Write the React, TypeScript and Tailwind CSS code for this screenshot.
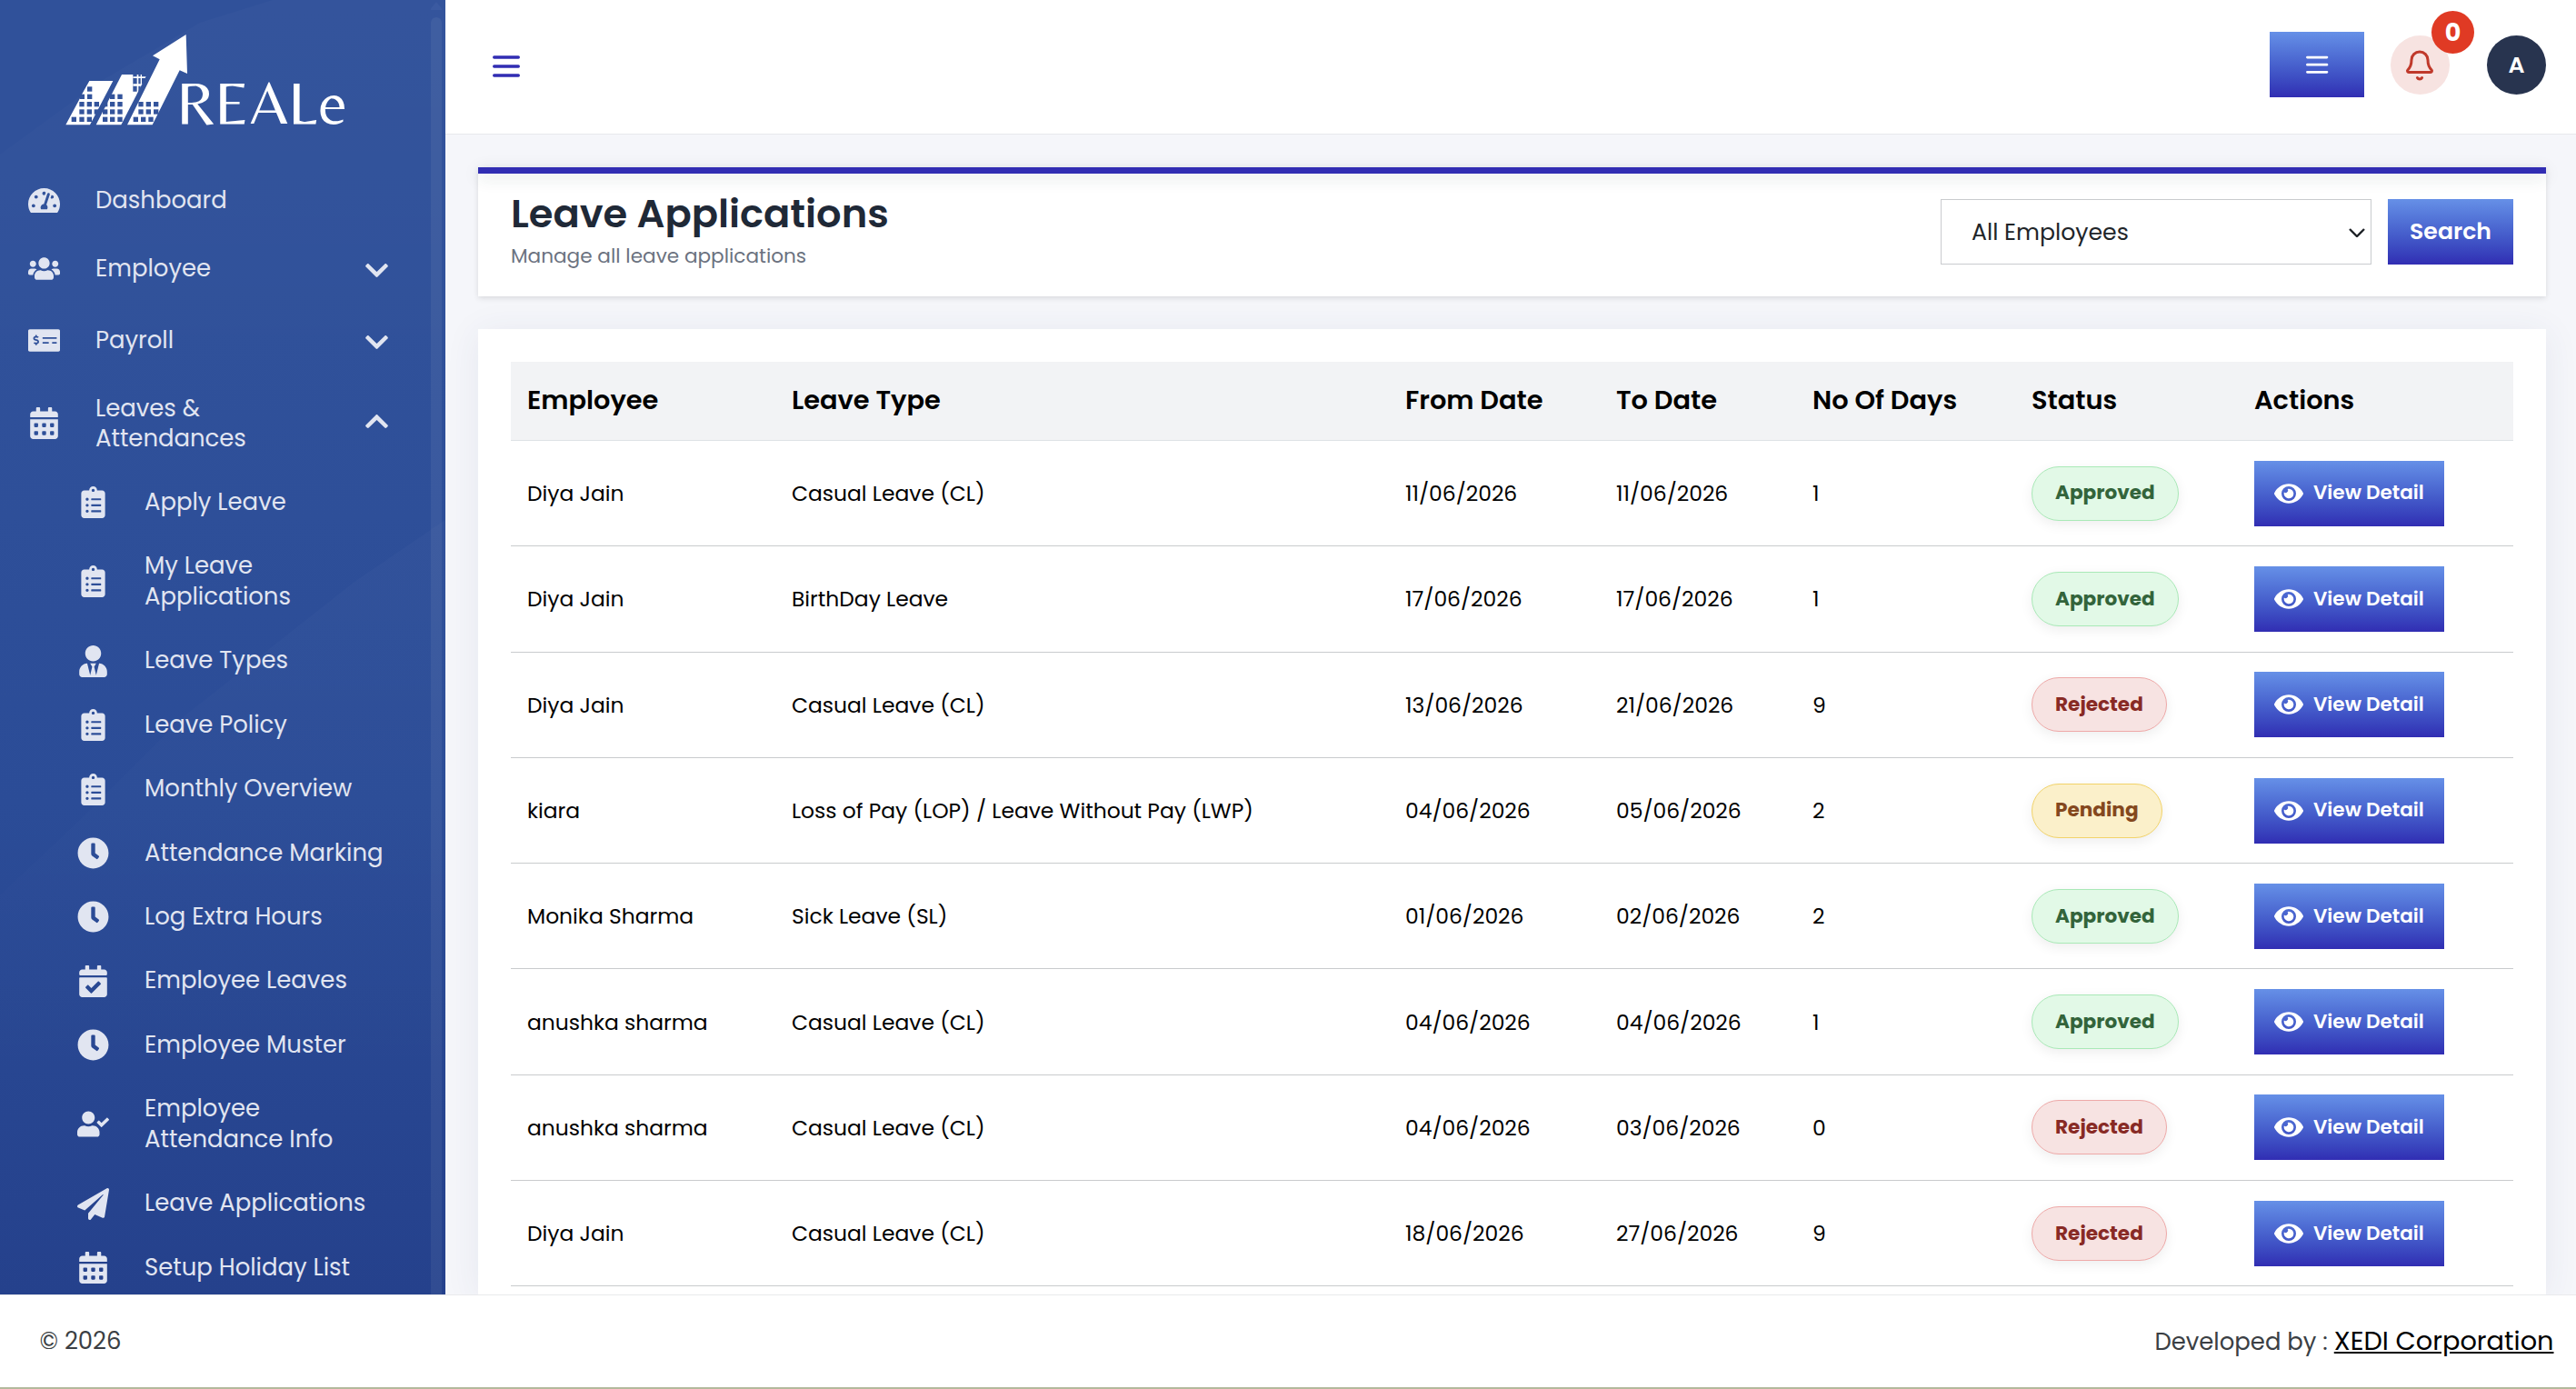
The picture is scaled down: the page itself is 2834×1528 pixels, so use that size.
import type { ReactNode } from "react";
import type { IconType } from "react-icons";
import {
  FaTachometerAlt,
  FaUsers,
  FaMoneyCheckAlt,
  FaCalendarAlt,
  FaClipboardList,
  FaUserTie,
  FaClock,
  FaCalendarCheck,
  FaUserCheck,
  FaPaperPlane,
  FaChevronDown,
  FaChevronUp,
  FaEye,
} from "react-icons/fa";
import { Bell } from "lucide-react";

type Status = "Approved" | "Rejected" | "Pending";

interface Leave {
  employee: string;
  type: string;
  from: string;
  to: string;
  days: number;
  status: Status;
}

const leaves: Leave[] = [
  { employee: "Diya Jain", type: "Casual Leave (CL)", from: "11/06/2026", to: "11/06/2026", days: 1, status: "Approved" },
  { employee: "Diya Jain", type: "BirthDay Leave", from: "17/06/2026", to: "17/06/2026", days: 1, status: "Approved" },
  { employee: "Diya Jain", type: "Casual Leave (CL)", from: "13/06/2026", to: "21/06/2026", days: 9, status: "Rejected" },
  { employee: "kiara", type: "Loss of Pay (LOP) / Leave Without Pay (LWP)", from: "04/06/2026", to: "05/06/2026", days: 2, status: "Pending" },
  { employee: "Monika Sharma", type: "Sick Leave (SL)", from: "01/06/2026", to: "02/06/2026", days: 2, status: "Approved" },
  { employee: "anushka sharma", type: "Casual Leave (CL)", from: "04/06/2026", to: "04/06/2026", days: 1, status: "Approved" },
  { employee: "anushka sharma", type: "Casual Leave (CL)", from: "04/06/2026", to: "03/06/2026", days: 0, status: "Rejected" },
  { employee: "Diya Jain", type: "Casual Leave (CL)", from: "18/06/2026", to: "27/06/2026", days: 9, status: "Rejected" },
];

const subItems: { label: string; icon: IconType; wrap?: boolean }[] = [
  { label: "Apply Leave", icon: FaClipboardList },
  { label: "My Leave Applications", icon: FaClipboardList, wrap: true },
  { label: "Leave Types", icon: FaUserTie },
  { label: "Leave Policy", icon: FaClipboardList },
  { label: "Monthly Overview", icon: FaClipboardList },
  { label: "Attendance Marking", icon: FaClock },
  { label: "Log Extra Hours", icon: FaClock },
  { label: "Employee Leaves", icon: FaCalendarCheck },
  { label: "Employee Muster", icon: FaClock },
  { label: "Employee Attendance Info", icon: FaUserCheck, wrap: true },
  { label: "Leave Applications", icon: FaPaperPlane },
  { label: "Setup Holiday List", icon: FaCalendarAlt },
];

const statusStyles: Record<Status, string> = {
  Approved: "bg-[#e2f9e7] border-[#a9e9b7] text-[#33643b]",
  Rejected: "bg-[#f7e3e2] border-[#eea9a8] text-[#882a25]",
  Pending: "bg-[#fbf0ca] border-[#f2d369] text-[#84481e]",
};

const columns = "grid grid-cols-[291px_675px_232px_216px_241px_245px_1fr]";

function MenuLines({ className }: { className: string }) {
  return (
    <svg viewBox="0 0 24 24" fill="none" stroke="currentColor" strokeWidth="2" strokeLinecap="round" className={className}>
      <path d="M4 6h16M4 12h16M4 18h16" />
    </svg>
  );
}

/* Windows punched into the three bars of the logo. */
const windows: [number, number][] = [
  [93, 196],
  [68, 221], [93, 221],
  [67, 246], [92, 246], [116, 246],
  [67, 271], [92, 271], [116, 271],
  [41, 296], [67, 296], [92, 296],
  [168, 221], [193, 221],
  [144, 246], [168, 246], [193, 246],
  [144, 271], [168, 271], [193, 271],
  [144, 296], [168, 296], [193, 296],
  [262, 246], [287, 246], [312, 246],
  [262, 271], [287, 271], [312, 271],
  [245, 296], [270, 296], [295, 296],
];

function Logo() {
  return (
    <svg viewBox="0 0 990 420" className="h-[140px] w-[330px]">
      <defs>
        <mask id="windows">
          <rect width="990" height="420" fill="white" />
          {windows.map(([x, y]) => (
            <rect key={`${x}-${y}`} x={x} y={y} width="16" height="16" fill="black" />
          ))}
          <path d="M244 156H292L264 212H244Z" fill="black" />
          <path d="M257 156h5v60h-5zM269 156h4v48h-4zM244 163h46v5h-46zM244 187h34v7h-34z" fill="white" />
        </mask>
      </defs>
      <g fill="white" mask="url(#windows)">
        <path d="M100 177H178L102 322H22L66 240 76 220Z" />
        <path d="M207 156H290L205 322H122Z" />
        <path d="M332 106L309 94 419 24 423 153 398 142 308 322H225Z" />
      </g>
      <text y="318" x="388 514 630 756 857" fill="white" fontSize="200" className="font-['Belleza','Lato',sans-serif]">
        REALe
      </text>
    </svg>
  );
}

function MainItem({ icon: Icon, label, className, trailing }: { icon: IconType; label: string; className: string; trailing?: ReactNode }) {
  return (
    <div className={`flex items-center pl-[31px] ${className}`}>
      <Icon className="h-[35px] w-[35px] shrink-0" />
      <span className="ml-[39px] w-[295px] pt-px leading-[33.7px]">{label}</span>
      {trailing}
    </div>
  );
}

function Sidebar() {
  return (
    <aside className="relative w-[490px] shrink-0 overflow-hidden bg-[linear-gradient(180deg,#30519a_0%,#30519a_25%,#2b4c97_62%,#25418c_100%)] text-[25.92px] text-[#e1e5f1]">
      <svg viewBox="0 0 490 1424" className="absolute inset-0 h-full w-full">
        <defs>
          <linearGradient id="sheen" x1="0" y1="0" x2="0" y2="1">
            <stop offset="0" stopColor="white" stopOpacity="0.02" />
            <stop offset="1" stopColor="white" stopOpacity="0" />
          </linearGradient>
        </defs>
        <path d="M0 170L110 90 220 25 300 0H490V420H0Z" fill="url(#sheen)" />
        <path d="M490 572L390 640 200 790 90 900 0 985V1240H490Z" fill="url(#sheen)" />
      </svg>
      <nav className="relative">
        <div className="h-[183px] pl-[65px] pt-[30px]">
          <Logo />
        </div>
        <MainItem icon={FaTachometerAlt} label="Dashboard" className="h-[74px]" />
        <MainItem icon={FaUsers} label="Employee" className="h-[77px]" trailing={<FaChevronDown className="mt-1 h-[29px] w-[29px]" />} />
        <MainItem icon={FaMoneyCheckAlt} label="Payroll" className="h-[80px]" trailing={<FaChevronDown className="mt-1 h-[29px] w-[29px]" />} />
        <MainItem icon={FaCalendarAlt} label="Leaves & Attendances" className="h-[103.5px] [&>span]:pr-24" trailing={<FaChevronUp className="-mt-1 h-[29px] w-[29px]" />} />
        {subItems.map(({ label, icon: Icon, wrap }) => (
          <div key={label} className={`flex items-center pl-[85px] ${wrap ? "h-[104.2px]" : "h-[70.4px]"}`}>
            <Icon className="h-[35px] w-[35px] shrink-0" />
            <span className={`ml-[39px] leading-[33.7px] ${wrap ? "w-[220px]" : "whitespace-nowrap"}`}>{label}</span>
          </div>
        ))}
      </nav>
      <div className="absolute right-1 top-0 flex h-full w-3 flex-col items-center">
        <div className="mt-[2px] h-[9px] w-3 bg-[#3b5aa1] [clip-path:polygon(50%_0,100%_80%,100%_100%,0_100%,0_80%)]" />
        <div className="mt-2 w-3 flex-1 rounded-t-full bg-white/6" />
      </div>
    </aside>
  );
}

function Header() {
  return (
    <header className="flex h-[148px] shrink-0 items-start border-b border-[#e7e9ec] bg-white pr-[33px] pt-[35px]">
      <MenuLines className="ml-[47px] mt-[18px] h-10 w-10 text-[#312db3]" />
      <button className="ml-auto flex h-[72px] w-[104px] items-center justify-center bg-linear-to-b from-[#6690e7] to-[#312db3] text-white">
        <MenuLines className="h-[32.4px] w-[32.4px]" />
      </button>
      <div className="relative ml-[29px] mt-1 flex h-[65px] w-[65px] items-center justify-center rounded-full bg-[#f7e3e1] pr-px text-[#c0392b]">
        <Bell size={36} strokeWidth={2} />
        <span className="absolute -right-[27px] -top-[27px] flex h-[47px] w-[47px] items-center justify-center rounded-full bg-[#e03a24] text-[27px] font-bold leading-none text-white">
          0
        </span>
      </div>
      <div className="ml-[41px] mt-1 flex h-[65px] w-[65px] items-center justify-center rounded-full bg-[#28344f] text-[25.2px] font-semibold leading-none text-white">
        A
      </div>
    </header>
  );
}

function TitleCard() {
  return (
    <section className="h-[142px] bg-white shadow-[0_2px_6px_rgba(0,0,0,0.12)]">
      <div className="h-[7px] bg-[#312db3] shadow-[0_4px_18px_rgba(30,70,60,0.16)]" />
      <div className="flex items-start px-9 pt-[18px]">
        <div className="flex-1">
          <h1 className="text-[43.2px] font-semibold leading-[53px] text-[#1f2937]">Leave Applications</h1>
          <p className="pt-px text-[21.6px] leading-[38px] text-[#6b7280]">Manage all leave applications</p>
        </div>
        <div className="mt-[10px] flex gap-[18px]">
          <div className="relative">
            <select className="h-[72px] w-[474px] appearance-none border border-[#c9cbce] bg-white pl-[33px] pt-[2px] text-[25.2px] text-[#212529]">
              <option>All Employees</option>
            </select>
            <svg viewBox="0 0 18 10" fill="none" stroke="#1f2328" strokeWidth="2.4" className="absolute right-[7px] top-[32px] h-[10px] w-[18px]">
              <path d="M1 1l8 8 8-8" />
            </svg>
          </div>
          <button className="h-[72px] w-[138px] bg-linear-to-b from-[#6690e7] to-[#312db3] text-[25.2px] font-semibold text-white">Search</button>
        </div>
      </div>
    </section>
  );
}

function LeaveTable() {
  return (
    <section className="mt-9 flex-1 bg-white px-9 pt-9 shadow-[0_4px_36px_rgba(50,60,110,0.08)]">
      <div className={`${columns} h-[87px] items-center border-b border-[#dee2e6] bg-[#f2f3f5] pl-[18px] text-[28.8px] font-semibold text-black`}>
        {["Employee", "Leave Type", "From Date", "To Date", "No Of Days", "Status", "Actions"].map((heading) => (
          <div key={heading}>{heading}</div>
        ))}
      </div>
      {leaves.map((leave, index) => (
        <div key={index} className={`${columns} h-[116.3px] items-center border-b border-[#c9cbcd] pl-[18px] text-[23.4px] text-black`}>
          <div>{leave.employee}</div>
          <div>{leave.type}</div>
          <div>{leave.from}</div>
          <div>{leave.to}</div>
          <div>{leave.days}</div>
          <div>
            <span className={`inline-flex h-[60px] items-center rounded-full border px-[25px] text-[21.6px] font-bold shadow-[0_4px_14px_rgba(0,0,0,0.07)] ${statusStyles[leave.status]}`}>
              {leave.status}
            </span>
          </div>
          <div>
            <button className="flex h-[72px] w-[209px] items-center bg-linear-to-b from-[#6690e7] to-[#312db3] pl-[22px] text-[21.6px] font-semibold text-white">
              <FaEye className="mr-[11px] h-8 w-8" />
              View Detail
            </button>
          </div>
        </div>
      ))}
    </section>
  );
}

export default function App() {
  return (
    <div className="flex h-[1528px] w-[2834px] flex-col overflow-hidden bg-white font-['Poppins',sans-serif]">
      <div className="flex h-[1424px] shrink-0 overflow-hidden">
        <Sidebar />
        <div className="flex min-w-0 flex-1 flex-col bg-[#f5f6fa]">
          <Header />
          <main className="flex min-h-0 flex-1 flex-col overflow-hidden pl-9 pr-[33px] pt-9">
            <TitleCard />
            <LeaveTable />
          </main>
        </div>
      </div>
      <footer className="flex h-[102px] shrink-0 items-center justify-between border-t border-[#e9eaec] bg-white pl-[43.5px] pr-[24.5px] text-[25.92px] text-[#3b3f44]">
        <span>© 2026</span>
        <span>
          Developed by :{" "}
          <a className="text-[28.8px] text-black underline">XEDI Corporation</a>
        </span>
      </footer>
      <div className="h-[2px] shrink-0 bg-[#b3b99c]" />
    </div>
  );
}
